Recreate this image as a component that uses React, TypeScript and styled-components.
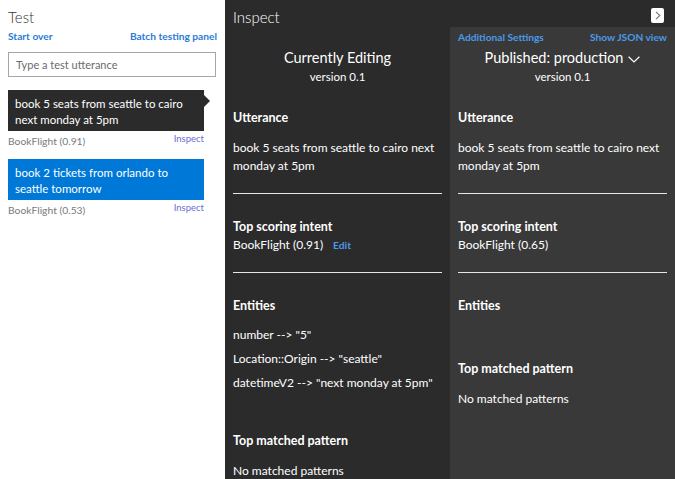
import React from 'react'
import styled, { createGlobalStyle } from 'styled-components'

const Global = createGlobalStyle`
  html, body { margin: 0; padding: 0; }
  body { font-family: Lato, "Open Sans", sans-serif; background: #2b2b2b; }
  * { box-sizing: border-box; }
`

const entities = [
  'number --> "5"',
  'Location::Origin --> "seattle"',
  'datetimeV2 --> "next monday at 5pm"',
]

const utterances = [
  { text: 'book 5 seats from seattle to cairo next monday at 5pm', intent: 'BookFlight (0.91)', selected: true },
  { text: 'book 2 tickets from orlando to seattle tomorrow', intent: 'BookFlight (0.53)', selected: false },
]

const Chevron = () => (
  <svg width="12" height="7" viewBox="0 0 12 7" style={{ marginLeft: 5, marginTop: 2 }}>
    <path d="M0.6 0.8 L6 6 L11.4 0.8" fill="none" stroke="#fff" strokeWidth="1.2" />
  </svg>
)

export default function App() {
  return (
    <>
      <Global />
      <Page>
        <TestPanel>
          <PanelTitle dark={false}>Test</PanelTitle>
          <LinkRow>
            <Link>Start over</Link>
            <Link>Batch testing panel</Link>
          </LinkRow>
          <Input placeholder="Type a test utterance" />
          <List>
            {utterances.map((u) => (
              <Item key={u.text}>
                <Card selected={u.selected}>{u.text}</Card>
                <Meta>
                  <Intent>{u.intent}</Intent>
                  <InspectLink>Inspect</InspectLink>
                </Meta>
              </Item>
            ))}
          </List>
        </TestPanel>

        <InspectPanel>
          <Header>
            <PanelTitle dark>Inspect</PanelTitle>
            <CloseBtn>
              <svg width="6" height="9" viewBox="0 0 6 9">
                <path d="M1 0.8 L4.8 4.5 L1 8.2" fill="none" stroke="#777" strokeWidth="1.1" />
              </svg>
            </CloseBtn>
          </Header>
          <Columns>
            <Column>
              <LinkRow dark />
              <ColTitle>Currently Editing</ColTitle>
              <Version>version 0.1</Version>
              <Section>
                <Heading>Utterance</Heading>
                <Body>book 5 seats from seattle to cairo next monday at 5pm</Body>
              </Section>
              <Divider />
              <Section>
                <Heading>Top scoring intent</Heading>
                <Value>
                  BookFlight (0.91)<EditLink>Edit</EditLink>
                </Value>
              </Section>
              <Divider />
              <Section tight>
                <Heading>Entities</Heading>
                <EntityList>
                  {entities.map((e) => (
                    <Entity key={e}>{e}</Entity>
                  ))}
                </EntityList>
              </Section>
              <Section>
                <Heading>Top matched pattern</Heading>
                <Body>No matched patterns</Body>
              </Section>
            </Column>

            <Column published>
              <LinkRow dark>
                <Link dark>Additional Settings</Link>
                <Link dark>Show JSON view</Link>
              </LinkRow>
              <ColTitle>
                Published: production
                <Chevron />
              </ColTitle>
              <Version>version 0.1</Version>
              <Section>
                <Heading>Utterance</Heading>
                <Body>book 5 seats from seattle to cairo next monday at 5pm</Body>
              </Section>
              <Divider />
              <Section>
                <Heading>Top scoring intent</Heading>
                <Value>BookFlight (0.65)</Value>
              </Section>
              <Divider />
              <Section tight>
                <Heading>Entities</Heading>
                <EntityList />
              </Section>
              <Section>
                <Heading>Top matched pattern</Heading>
                <Body>No matched patterns</Body>
              </Section>
            </Column>
          </Columns>
        </InspectPanel>
      </Page>
    </>
  )
}

const Page = styled.div`
  display: flex;
  width: 675px;
  height: 479px;
  overflow: hidden;
`
const TestPanel = styled.div`
  width: 225px;
  flex-shrink: 0;
  background: #fff;
  padding: 7px 8px 0;
`
const PanelTitle = styled.div<{ dark: boolean }>`
  font-size: 15px;
  font-weight: 300;
  line-height: 20px;
  color: ${(p) => (p.dark ? '#fff' : '#333')};
`
const LinkRow = styled.div<{ dark?: boolean }>`
  display: flex;
  justify-content: space-between;
  height: 14px;
  line-height: 14px;
  margin-top: ${(p) => (p.dark ? '0' : '2px')};
`
const Link = styled.span<{ dark?: boolean }>`
  font-size: 10.2px;
  font-weight: 700;
  color: ${(p) => (p.dark ? '#4a9ae8' : '#2b7bd6')};
  cursor: pointer;
`
const Input = styled.input`
  display: block;
  width: 208px;
  height: 25px;
  margin-top: 9px;
  border: 1px solid #a6a6a6;
  padding: 0 7px;
  font-family: inherit;
  font-size: 11px;
  outline: none;
  &::placeholder { color: #6b6b6b; }
`
const List = styled.div`
  margin-top: 13px;
  display: flex;
  flex-direction: column;
  gap: 9px;
`
const Item = styled.div`
  width: 196px;
`
const Card = styled.div<{ selected: boolean }>`
  position: relative;
  height: 41px;
  padding: 6px 7px 0;
  font-size: 11.5px;
  line-height: 16px;
  color: #fff;
  background: ${(p) => (p.selected ? '#2b2b2b' : '#0078d7')};
  &::after {
    content: '';
    display: ${(p) => (p.selected ? 'block' : 'none')};
    position: absolute;
    right: -6px;
    top: 5px;
    border-left: 6px solid #2b2b2b;
    border-top: 6px solid transparent;
    border-bottom: 6px solid transparent;
  }
`
const Meta = styled.div`
  display: flex;
  justify-content: space-between;
  align-items: flex-start;
  height: 19px;
  padding-top: 2px;
`
const Intent = styled.span`
  font-size: 10.3px;
  color: #7a7a7a;
  line-height: 14px;
  margin-top: 1px;
`
const InspectLink = styled.span`
  font-size: 9.5px;
  color: #6b6fd6;
  line-height: 12px;
`
const InspectPanel = styled.div`
  flex: 1;
  display: flex;
  flex-direction: column;
  background: #2b2b2b;
  color: #fff;
`
const Header = styled.div`
  height: 30px;
  display: flex;
  justify-content: space-between;
  align-items: flex-start;
  padding: 7px 11px 0 8px;
`
const CloseBtn = styled.div`
  width: 13px;
  height: 15px;
  margin-top: 1px;
  background: #fff;
  border-radius: 2px;
  display: flex;
  align-items: center;
  justify-content: center;
`
const Columns = styled.div`
  flex: 1;
  display: grid;
  grid-template-columns: 225px 225px;
`
const Column = styled.div<{ published?: boolean }>`
  background: ${(p) => (p.published ? '#393939' : '#2b2b2b')};
  padding: 3px 8px 0;
`
const ColTitle = styled.div`
  margin-top: 4px;
  display: flex;
  justify-content: center;
  align-items: center;
  font-size: 14.5px;
  line-height: 20px;
  font-weight: 400;
`
const Version = styled.div`
  margin-top: 1px;
  text-align: center;
  font-size: 11.5px;
  line-height: 16px;
`
const Section = styled.div<{ tight?: boolean }>`
  padding-top: 25px;
  padding-bottom: ${(p) => (p.tight ? '13px' : '18px')};
`
const Heading = styled.div`
  font-size: 12.5px;
  font-weight: 700;
  line-height: 16px;
`
const Body = styled.div`
  margin-top: 13px;
  font-size: 12px;
  line-height: 18px;
`
const Value = styled.div`
  margin-top: 1px;
  font-size: 12px;
  line-height: 18px;
`
const EditLink = styled.span`
  margin-left: 10px;
  font-size: 10.2px;
  font-weight: 700;
  color: #4a9ae8;
`
const EntityList = styled.div`
  margin-top: 9px;
`
const Entity = styled.div`
  font-size: 12px;
  line-height: 24px;
`
const Divider = styled.div`
  height: 1px;
  background: #e6e6e6;
`
